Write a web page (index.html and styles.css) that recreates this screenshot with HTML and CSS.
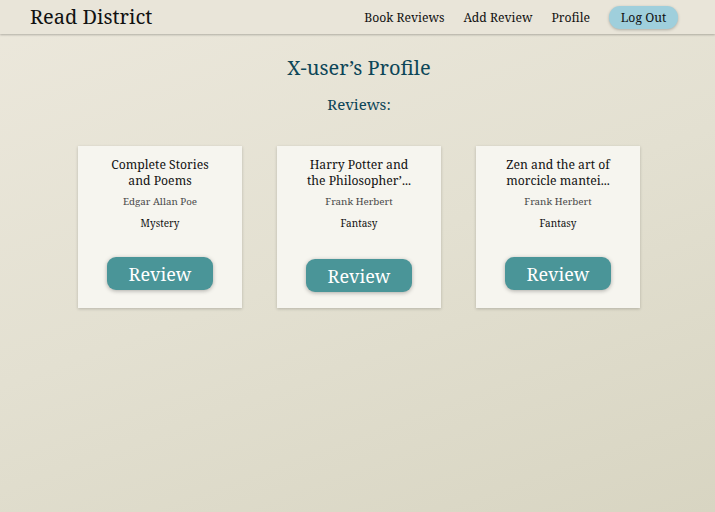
FILE: index.html
```html
<!DOCTYPE html>
<html>
<head>
<meta charset="utf-8">
<link rel="stylesheet" href="styles.css">
</head>
<body>
<nav class="nav">
  <div class="brand">Read District</div>
  <div class="links">
    <a class="link">Book Reviews</a>
    <a class="link">Add Review</a>
    <a class="link">Profile</a>
    <button class="logout">Log Out</button>
  </div>
</nav>
<main class="main">
  <h1 class="title">X-user’s Profile</h1>
  <h2 class="subtitle">Reviews:</h2>
  <div class="cards">
    <div class="card">
      <div class="book">Complete Stories and Poems</div>
      <div class="author">Edgar Allan Poe</div>
      <div class="genre">Mystery</div>
      <button class="review">Review</button>
    </div>
    <div class="card">
      <div class="book">Harry Potter and the Philosopher’...</div>
      <div class="author">Frank Herbert</div>
      <div class="genre">Fantasy</div>
      <button class="review review-low">Review</button>
    </div>
    <div class="card">
      <div class="book">Zen and the art of morcicle mantei...</div>
      <div class="author">Frank Herbert</div>
      <div class="genre">Fantasy</div>
      <button class="review">Review</button>
    </div>
  </div>
</main>
</body>
</html>
```
FILE: styles.css
```css
html, body { height: 100%; }
body {
  margin: 0;
  font-family: "Noto Serif", "Droid Serif", "DejaVu Serif", serif;
  background: linear-gradient(160deg, #ece8dc 0%, #e3e0d1 50%, #d8d5c2 100%);
  color: #111;
}
.nav {
  height: 34px;
  display: flex;
  align-items: center;
  justify-content: space-between;
  padding: 0 37px 0 30px;
  background: #e9e5d9;
  box-shadow: 0 1px 2px rgba(0,0,0,0.25);
  position: relative;
}
.brand { font-size: 20px; line-height: 1; }
.links { display: flex; align-items: center; gap: 19px; }
.link { font-size: 12.2px; color: #111; }
.logout {
  font-family: inherit;
  font-size: 12.2px;
  color: #111;
  background: #9fcfdc;
  border: none;
  border-radius: 11px;
  width: 69px;
  height: 23px;
  padding: 0;
  box-shadow: 0 1px 3px rgba(0,0,0,0.25);
}
.main {
  display: flex;
  flex-direction: column;
  align-items: center;
  padding-left: 3px;
}
.title {
  margin: 20px 0 0;
  font-size: 20px;
  line-height: 27px;
  font-weight: normal;
  color: #0d4658;
}
.subtitle {
  margin: 13px 0 0;
  font-size: 15px;
  line-height: 21px;
  font-weight: normal;
  color: #0d4658;
}
.cards { display: flex; gap: 35px; margin-top: 31px; }
.card {
  width: 164px;
  height: 162px;
  box-sizing: border-box;
  background: #f6f5ef;
  box-shadow: 0 1px 3px rgba(0,0,0,0.2);
  display: flex;
  flex-direction: column;
  align-items: center;
  padding: 11px 28px 0;
  text-align: center;
}
.book { font-size: 12.2px; line-height: 16px; }
.author { font-size: 9.8px; color: #4a4a4a; margin-top: 6px; line-height: 14px; }
.genre { font-size: 10px; margin-top: 7px; line-height: 14px; }
.review {
  margin-top: 27px;
  width: 106px;
  height: 33px;
  padding: 0;
  border: none;
  border-radius: 9px;
  background: #4a9598;
  color: #fff;
  font-family: inherit;
  font-size: 18px;
  box-shadow: 0 1px 4px rgba(0,0,0,0.3);
}
.review-low { margin-top: 29px; }
```
